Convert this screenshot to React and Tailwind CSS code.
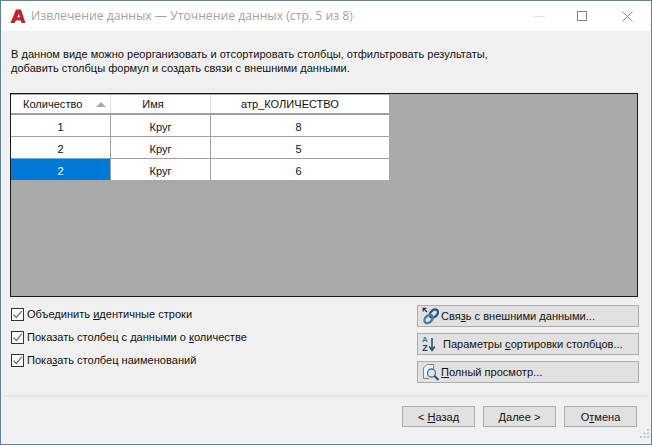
import React from "react";

const rows = [
  { qty: "1", name: "Круг", attr: "8" },
  { qty: "2", name: "Круг", attr: "5" },
  { qty: "2", name: "Круг", attr: "6", selected: true },
];

const Check = ({ children }) => (
  <label className="flex items-center h-[13px] gap-[3px] text-[#111111]">
    <span className="flex items-center justify-center w-[13px] h-[13px] border border-[#333333] bg-white shrink-0">
      <svg width="11" height="11" viewBox="0 0 11 11">
        <path d="M1.5 5.5 L4.3 8.5 L9.8 1.8" fill="none" stroke="#707070" strokeWidth="1.2" />
      </svg>
    </span>
    <span>{children}</span>
  </label>
);

const LinkIcon = () => (
  <svg width="18" height="18" viewBox="0 0 18 18">
    <path d="M5 5 L1.5 1.5 M1.2 4.5 V1.2 H4.5" fill="none" stroke="#222" strokeWidth="1.1" />
    <ellipse cx="11.8" cy="6.6" rx="4.8" ry="3.3" transform="rotate(-45 11.8 6.6)" fill="none" stroke="#2a5886" strokeWidth="2.4" />
    <ellipse cx="6.6" cy="12" rx="4.8" ry="3.3" transform="rotate(-45 6.6 12)" fill="none" stroke="#4a7ca8" strokeWidth="2.4" />
  </svg>
);

const SortIcon = () => (
  <span className="flex items-center w-[18px] h-[18px]">
    <span className="flex flex-col items-center font-bold leading-[8px]">
      <span className="text-[8px] text-[#3a7ab0]">A</span>
      <span className="text-[9px] text-[#1d3f60]">Z</span>
    </span>
    <svg width="8" height="15" viewBox="0 0 8 15">
      <path d="M4 1 V13 M1.2 9.5 L4 13.5 L6.8 9.5" fill="none" stroke="#27496d" strokeWidth="1.5" />
    </svg>
  </span>
);

const PreviewIcon = () => (
  <svg width="18" height="18" viewBox="0 0 18 18">
    <path d="M1.5 15.5 V5 L5 1.5 H11.5 V6" fill="#eef3f8" stroke="#5f8ab0" strokeWidth="1" />
    <path d="M1.5 15.5 H7" fill="none" stroke="#5f8ab0" strokeWidth="1" />
    <circle cx="9.5" cy="10" r="4" fill="#dbe9f4" stroke="#4a6f92" strokeWidth="1.3" />
    <path d="M12.5 13 L16.5 17" stroke="#27496d" strokeWidth="2" />
  </svg>
);

const ToolButton = ({ icon, children, narrow }) => (
  <button className={`flex items-center h-[22px] pl-[4px] border border-[#adadad] bg-[#e1e1e1] text-[#111111] ${narrow ? "gap-[1px]" : "gap-[3px]"}`}>
    <span className="w-[18px] shrink-0">{icon}</span>
    <span>{children}</span>
  </button>
);

const NavButton = ({ children }) => (
  <button className="w-[73px] h-[21px] border border-[#adadad] bg-[#e1e1e1] text-[#111111] text-center">
    {children}
  </button>
);

export default function App() {
  return (
    <div className="flex flex-col w-[652px] h-[445px] border border-[#5d82a3] bg-[#f0f0f0] text-[11.05px] leading-[14px] font-['Liberation_Sans',sans-serif] overflow-hidden">
      <div className="flex items-center h-[30px] bg-white shrink-0 pl-[9px]">
        <svg width="16" height="16" viewBox="0 0 16 16">
          <path d="M0.5 15 L6 1.5 H11 L15.5 15 H11.5 L10.7 12.5 H6 L4.5 15 Z M7.3 9.2 H9.8 L8.9 5.8 Z" fill="#bd2630" fillRule="evenodd" />
        </svg>
        <span className="ml-[5px] text-[12.2px] font-['Open_Sans',sans-serif] text-[#a3a3a3]">
          Извлечение данных — Уточнение данных (стр. 5 из 8)
        </span>
        <div className="flex items-center ml-auto pr-[18px] gap-[20px]">
          <div className="w-[11px] h-px bg-[#e2e2e2] mr-[12px]" />
          <div className="w-[10px] h-[10px] border border-[#8a8a8a]" />
          <svg width="11" height="11" viewBox="0 0 11 11" className="ml-[15px]">
            <path d="M0.5 0.5 L10.5 10.5 M10.5 0.5 L0.5 10.5" stroke="#8a8a8a" strokeWidth="1" />
          </svg>
        </div>
      </div>

      <div className="flex flex-col flex-1 min-h-0">
        <p className="pt-[16px] pl-[10px] text-[#111111]">
          В данном виде можно реорганизовать и отсортировать столбцы, отфильтровать результаты,
          <br />
          добавить столбцы формул и создать связи с внешними данными.
        </p>

        <div className="mt-[18px] ml-[9px] mr-[13px] h-[204px] bg-[#a9a9a9] border border-[#1a1a1a] pt-px shrink-0">
          <div className="w-[378px] bg-white text-[#111111]">
            <div className="grid grid-cols-[100px_100px_178px] h-[20px] border-b-2 border-[#a0a0a0]">
              <div className="flex items-center pl-[12px] pr-[4px] border-r border-[#e3e3e3]">
                <span>Количество</span>
                <span className="ml-auto w-0 h-0 border-x-[5px] border-x-transparent border-b-[5px] border-b-[#a8a8a8]" />
              </div>
              <div className="flex items-center justify-center border-r border-[#e3e3e3] pr-[15px]">Имя</div>
              <div className="flex items-center justify-center pr-[20px]">атр_КОЛИЧЕСТВО</div>
            </div>
            {rows.map((row, i) => (
              <div key={i} className="grid grid-cols-[100px_100px_178px] h-[22px] border-b border-[#a0a0a0] last:border-b-0 last:h-[21px]">
                <div className={`flex items-center justify-center pt-[2px] border-r border-[#a0a0a0] ${row.selected ? "bg-[#0078d7] text-white" : ""}`}>
                  {row.qty}
                </div>
                <div className="flex items-center justify-center pt-[2px] border-r border-[#a0a0a0]">{row.name}</div>
                <div className="flex items-center justify-center pt-[2px] pr-[3px]">{row.attr}</div>
              </div>
            ))}
          </div>
        </div>

        <div className="flex mt-[8px] pl-[10px] pr-[12px]">
          <div className="flex flex-col gap-[10px] pt-[2.5px]">
            <Check>Объединить <u>и</u>дентичные строки</Check>
            <Check>Показать столбец с данными о <u>к</u>оличестве</Check>
            <Check>Пока<u>з</u>ать столбец наименований</Check>
          </div>
          <div className="flex flex-col gap-[6px] ml-auto w-[222px]">
            <ToolButton narrow icon={<LinkIcon />}>Свя<u>з</u>ь с внешними данными...</ToolButton>
            <ToolButton icon={<SortIcon />}>Параметры <u>с</u>ортировки столбцов...</ToolButton>
            <ToolButton narrow icon={<PreviewIcon />}><u>П</u>олный просмотр...</ToolButton>
          </div>
        </div>

        <div className="mt-[12px] mx-[3px] h-[2px] bg-[#e3e3e3]" />

        <div className="relative flex justify-end gap-[8px] mt-[9px] pr-[14px]">
          <NavButton>&lt; <u>Н</u>азад</NavButton>
          <NavButton><u>Д</u>алее &gt;</NavButton>
          <NavButton>О<u>т</u>мена</NavButton>
          <svg width="11" height="11" viewBox="0 0 11 11" className="absolute right-[1px] top-[22px]">
            <path d="M8 1 h2 v2 h-2 Z M4.5 4.5 h2 v2 h-2 Z M8 4.5 h2 v2 h-2 Z M1 8 h2 v2 h-2 Z M4.5 8 h2 v2 h-2 Z M8 8 h2 v2 h-2 Z" fill="#c4c4c4" />
          </svg>
        </div>
      </div>
    </div>
  );
}
